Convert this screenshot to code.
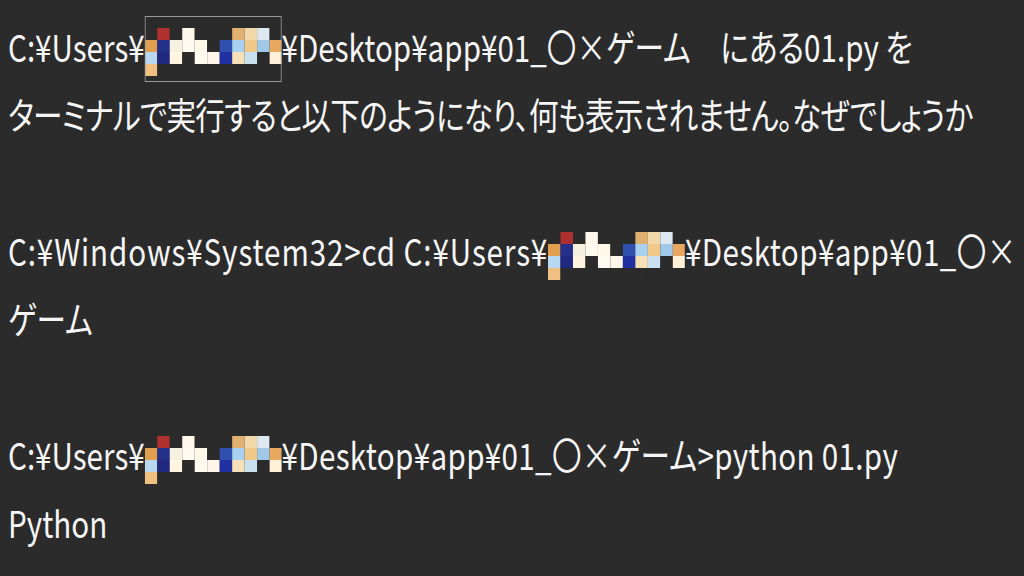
import React from "react";

const cells: string[][] = [
  ["#2b2b2b", "#b03030", "#2b2b2b", "#fff8e8", "#2b2b2b", "#2b2b2b", "#2b2b2b", "#e0b070", "#f0d8a8", "#dde8f0", "#2b2b2b"],
  ["#e0a050", "#25308a", "#f5f0e0", "#fffaf0", "#fff8e8", "#2b2b2b", "#3050b0", "#a8d0f0", "#f0c888", "#a0c8e8", "#e8a860"],
  ["#b8d8f0", "#202880", "#fff5e0", "#2b2b2b", "#fffaf0", "#fff5e8", "#2030a0", "#f5e0b8", "#c8e0f0", "#2b2b2b", "#fff0d8"],
  ["#f0c080", "#2b2b2b", "#2b2b2b", "#2b2b2b", "#2b2b2b", "#2b2b2b", "#2b2b2b", "#2b2b2b", "#2b2b2b", "#2b2b2b", "#2b2b2b"],
];

// blurred user name (pixel mosaic), drawn inside the 0.8 x-scaled text block
const Mosaic = ({ boxed = false }: { boxed?: boolean }) => (
  <span className="relative inline-block align-middle w-[171px] h-[48px] tracking-normal">
    <svg width="171" height="48" viewBox="0 0 137 48" preserveAspectRatio="none" className="block">
      {cells.map((row, r) =>
        row.map((c, i) => (
          <rect key={`${r}-${i}`} x={i * 12.5} y={r * 12} width="12.5" height="12" fill={c} />
        ))
      )}
    </svg>
    {boxed && <span className="absolute left-0 -top-[12px] w-[171px] h-[66px] border border-[#9a9a9a]" />}
  </span>
);

export default function App() {
  return (
    <div className="w-[1024px] h-[576px] overflow-hidden bg-[#2b2b2b]">
      <div
        className="origin-left scale-x-[0.8] w-[1280px] text-[#f6f6f6] pl-[10px] pt-[12px] text-[37px] leading-[68px] [font-feature-settings:'palt']"
        style={{ fontFamily: '"Noto Sans CJK JP", "Noto Sans", sans-serif' }}
      >
        <div className="whitespace-pre">
          C:¥Users¥<Mosaic boxed />¥Desktop¥app¥01_〇×ゲーム　にある01.py を
        </div>
        <div className="whitespace-pre tracking-[-0.9px]">
          ターミナルで実行すると以下のようになり、何も表示されません。なぜでしょうか
        </div>
        <div className="h-[68px]" />
        <div className="whitespace-pre">
          <span className="tracking-[1.1px]">C:¥Windows¥System32&gt;cd C:¥Users¥</span>
          <Mosaic />
          <span className="tracking-[0.5px]">¥Desktop¥app¥01_〇×</span>
        </div>
        <div className="whitespace-pre">ゲーム</div>
        <div className="h-[68px]" />
        <div className="whitespace-pre">
          C:¥Users¥<Mosaic />
          <span className="tracking-[0.4px]">¥Desktop¥app¥01_〇×ゲーム&gt;python 01.py</span>
        </div>
        <div className="whitespace-pre">Python</div>
      </div>
    </div>
  );
}
